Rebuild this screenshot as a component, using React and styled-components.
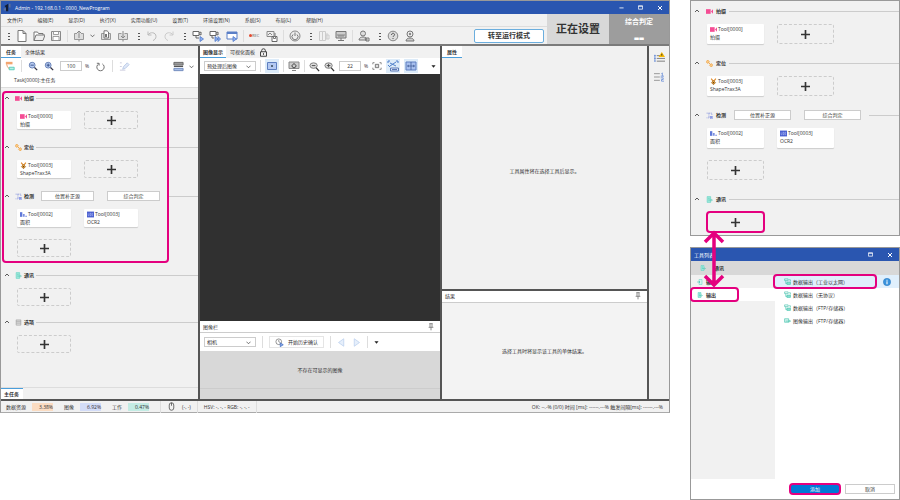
import { useState } from "react";
import styled, { createGlobalStyle } from "styled-components";

const GlobalStyle = createGlobalStyle`
  * {
    box-sizing: border-box;
  }
  body {
    margin: 0;
    background: #fff;
    color: #333;
    font: 5px/8px "Open Sans", "Noto Sans CJK SC", sans-serif;
  }
  button, input, select {
    margin: 0;
    padding: 0;
    font: inherit;
    color: inherit;
  }
  svg {
    display: block;
    flex: none;
  }
`;

const PINK = "#e4007f";

/* ---------- icons, all on a 12 x 12 grid ---------- */

const magnifier = (
  <>
    <path d="M7.5 7.5 11 11" stroke="#334" strokeWidth="1.5" />
    <circle cx="5" cy="5" r="3.5" fill="#b9cdf3" stroke="#5b76ad" />
  </>
);

const grayMagnifier = (
  <>
    <path d="M7.5 7 11 11" stroke="#333" strokeWidth="1.4" />
    <ellipse cx="5" cy="5" rx="4" ry="3" fill="#ddd" stroke="#777" />
  </>
);

const shapes = {
  app: (
    <>
      <path d="M2 4 7 1v10H4V6z" fill="#111c33" />
      <path d="M1 7h3v3H1zM8 1h2v5H8z" fill="#5f7198" />
    </>
  ),
  newFile: <path d="M2 .5h5l3 3v8H2zM7 .5v3h3" fill="#fff" stroke="#777" />,
  open: (
    <>
      <path d="M1 10.500V2h3.500l1 1.500H10V5" fill="#fff" stroke="#777" />
      <path d="M1 10.500 3 5h9l-2 5.500z" fill="#eee" stroke="#777" />
    </>
  ),
  save: (
    <>
      <path d="M1.500 1.500h9v9h-9z" fill="#eee" stroke="#888" />
      <path d="M3.500 1.500h5v3h-5zM3 6.500h6v4H3z" fill="#fff" stroke="#888" strokeWidth=".8" />
    </>
  ),
  upload: (
    <>
      <path d="M4 3.500H1.500v6h9v-6H8" fill="#ddd" stroke="#999" />
      <path d="M6 8V1M4 3l2-2 2 2M6 10v1.500" stroke="#888" />
    </>
  ),
  copy: (
    <>
      <path d="M4 3.500H1.500v6h9v-6H8" fill="#ddd" stroke="#999" />
      <path d="M4 .8h3L8.500 2v6H4z" fill="#fff" stroke="#777" />
      <path d="M5 4h2v3H5z" fill="#777" />
    </>
  ),
  merge: (
    <>
      <path d="M4.500 3.500h-3v6h9v-6h-3" fill="#ddd" stroke="#999" />
      <path d="M6 1v7M4 6l2 2 2-2M6 10v1.500" stroke="#888" />
    </>
  ),
  undo: <path d="M2 1.500V5h3.500M2 5c2-3.500 8-3 8 1.500 0 2-1.500 3.500-3 4" stroke="#bbb" />,
  redo: <path d="M10 1.500V5H6.500M10 5C8 1.500 2 2 2 6.500c0 2 1.500 3.500 3 4" stroke="#ccc" />,
  camera1: (
    <>
      <path d="M1 1.500h6v4H1zM7 3l2-1v3L7 4" fill="#fff" stroke="#666" />
      <path d="M4 6v2h3" stroke="#666" />
      <path d="M8 6.500 11.500 9 8 11.500z" fill="#8fb0ee" stroke="#4f78cc" strokeWidth=".8" />
    </>
  ),
  camera2: (
    <>
      <path d="M1 1.500h6v4H1zM7 3l2-1v3L7 4" fill="#fff" stroke="#666" />
      <path d="M3 6v2h2" stroke="#666" />
      <path d="M6 6.500 9 9l-3 2.500zM9 6.500 11.500 9 9 11.500z" fill="#8fb0ee" stroke="#4f78cc" strokeWidth=".8" />
    </>
  ),
  windowRun: (
    <>
      <path d="M1 2h10v7H1z" fill="#fff" stroke="#5a7fc7" />
      <path d="M1 2h10v2H1z" fill="#5a7fc7" />
      <path d="M7 6.500 10.500 9 7 11.500z" fill="#8fb0ee" stroke="#4f78cc" strokeWidth=".8" />
    </>
  ),
  imageSave: (
    <>
      <path d="M1 1.500h7v5H1zM2 5l2-2 2 2" fill="#eee" stroke="#888" />
      <path d="M6 6.500h5v5H6z" fill="#fff" stroke="#666" />
      <path d="M7.500 6.500h2v2h-2zM9 3v3" stroke="#777" />
    </>
  ),
  clock: (
    <>
      <circle cx="6" cy="6" r="5" fill="#eee" stroke="#888" />
      <path d="M4 4.500a3 3 0 1 0 4 0M6 2.500V6" stroke="#777" />
    </>
  ),
  layout: <path d="M1.500 1.500h3v9h-3zM4.500 1.500h3v9h-3zM8 5h3v4H8zM9 3v6" stroke="#ccc" />,
  monitor: (
    <>
      <path d="M1 1.500h10v6.500H1z" fill="#ccc" stroke="#777" />
      <path d="M3 4v2h6V4M5 4v2M7 4v2" stroke="#777" strokeWidth=".8" />
      <path d="M6 8v2M3 10.500h6" stroke="#777" />
    </>
  ),
  user: (
    <>
      <circle cx="5" cy="3.500" r="2.500" fill="#ddd" stroke="#777" />
      <path d="M1 10c0-4 8-4 8 0zM7 8h4v3H8z" fill="#ddd" stroke="#777" />
    </>
  ),
  help: (
    <>
      <circle cx="6" cy="6" r="4.800" fill="#ddd" stroke="#888" />
      <path d="M4.500 5c0-2.500 3.500-2 3 0C7.300 6 6 6 6 7M6 8v1" stroke="#555" />
    </>
  ),
  support: (
    <>
      <circle cx="6" cy="4" r="3" fill="#eee" stroke="#777" />
      <circle cx="6" cy="4" r="1.200" fill="#888" />
      <path d="M2 11c0-4 8-4 8 0z" fill="#ccc" stroke="#777" />
    </>
  ),
  tree: (
    <>
      <path d="M1 1h8v3H1z" fill="#f2a56f" />
      <path d="M2 4c1 4 2 5 4 5" stroke="#e8894d" />
      <path d="M5 7.500h6v3H5z" fill="#b8f0e5" stroke="#4cc9b4" />
    </>
  ),
  zoomOut: <>{magnifier}<path d="M3 5h4" stroke="#27427d" /></>,
  zoomIn: <>{magnifier}<path d="M3 5h4M5 3v4" stroke="#27427d" /></>,
  grayOut: <>{grayMagnifier}<path d="M3 5h4" stroke="#444" /></>,
  grayIn: <>{grayMagnifier}<path d="M3 5h4M5 3v4" stroke="#444" /></>,
  refresh: <path d="M4 3.200a4 4 0 1 0 4 0M2 2.500h2.500V5" stroke="#666" />,
  pen: (
    <>
      <path d="M1 2h2M1 6h2M1 10h6" stroke="#ccd" />
      <path d="m4 9 1-3 4-4 2 2-4 4z" fill="#dfe8f8" stroke="#b9c9e6" />
    </>
  ),
  stack: (
    <>
      <path d="M1 1.500h10v3H1z" fill="#999" stroke="#666" />
      <path d="M1 6h10" stroke="#444" />
      <path d="M1 8h10v2.500H1z" fill="#a9bfe6" stroke="#6d88bb" />
    </>
  ),
  fit: (
    <>
      <path d="M1.500 2.500h9v7h-9z" fill="#b3c9f2" stroke="#5d7ec0" />
      <path d="M5 6h2M6 5v2" stroke="#345" />
    </>
  ),
  liveView: (
    <>
      <path d="M1 2h10v6.500H1zM4 10.500h4" fill="#ccc" stroke="#888" />
      <path d="M4.500 4.500a2 2 0 1 0 3 0M6 3v2" stroke="#444" />
    </>
  ),
  expand: (
    <>
      <path d="M1 4V2h2M9 2h2v2M11 8v2H9M3 10H1V8" stroke="#777" />
      <path d="M4 4h4v4H4z" fill="#ddd" stroke="#666" />
    </>
  ),
  autoFit: (
    <>
      <path d="M1 3V1h2M9 1h2v2M1 5l2 2M3 3l6 3M9 2 3 6" stroke="#4f7fc9" />
      <path d="M3.500 8h8v3h-8z" fill="#dfe8f8" stroke="#5a79b5" />
      <path d="M5 9.500h5" stroke="#5a79b5" />
    </>
  ),
  split: (
    <>
      <path d="M1 2h10v8H1z" fill="#a8c0ee" stroke="#5f7fc0" />
      <path d="M6 2v8M2.500 6h7M4 5 2.500 6 4 7M8 5l1.500 1L8 7" stroke="#456199" strokeWidth=".8" />
    </>
  ),
  lock: (
    <>
      <path d="M3.500 5V3.500a2.500 2.500 0 0 1 5 0V5M2 5h8v6H2z" stroke="#333" strokeWidth="1.200" />
      <path d="M6 7v2" stroke="#333" strokeWidth="1.400" />
    </>
  ),
  history: (
    <>
      <circle cx="5" cy="5" r="3.800" fill="#fff" stroke="#777" />
      <path d="M5 2.500V5l2 1" stroke="#777" />
      <path d="M7 6.500 11 9l-4 2.500z" fill="#8fb0ee" stroke="#3f68bc" />
    </>
  ),
  prev: <path d="M9 1v10L2 6z" fill="#e6effb" stroke="#b9cfee" />,
  next: <path d="M3 1v10l7-5z" fill="#e6effb" stroke="#b9cfee" />,
  pin: <path d="M3.500 1h5M4.500 1v5M7.500 1v5M2.500 6.500h7M6 6.500V11" stroke="#555" />,
  mouse: <path d="M3 4a3 3 0 0 1 6 0v4a3 3 0 0 1-6 0zM6 1v4" stroke="#444" />,
  video: (
    <>
      <path d="M0 2h8v8H0z" fill="#f44d94" />
      <path d="m8.500 6 3.500-4v8z" fill="#f44d94" />
    </>
  ),
  locate: (
    <>
      <path d="M4 4l4 4" stroke="#f29b30" strokeWidth="1.500" />
      <path d="m3 0 3 3-3 3-3-3zM9 6l3 3-3 3-3-3z" fill="#f9ca86" stroke="#ee9428" />
    </>
  ),
  inspect: (
    <>
      <path d="M1 2h4v8H1M5 2h5v4M7 8h4v3H7z" stroke="#6577d8" strokeDasharray="2 1" />
      <path d="M7 7h4v4H7z" fill="#8b9ae8" />
    </>
  ),
  comm: (
    <>
      <path d="M2 1h6v10H2z" fill="#9de7da" stroke="#5fd3c1" />
      <path d="M4 4h2M4 7h6M9 5l2 2-2 2" stroke="#45c3af" />
    </>
  ),
  option: <path d="M2 1.500h8v9H2zM2 4h8M2 7h8" fill="#ddd" stroke="#999" />,
  trax: (
    <>
      <path d="m2 1 3 4M10 1 7 5" stroke="#e08b2c" strokeWidth="2" />
      <path d="M6 4 9.500 8 6 11.500 2.500 8z" fill="#f0a93f" stroke="#835015" />
      <circle cx="6" cy="8" r="1.200" fill="#553410" />
    </>
  ),
  area: (
    <>
      <path d="M0 2h4v8H0z" fill="#5f78d8" />
      <path d="M5 5h3v5H5zM9 8h3v2H9z" fill="#7b8fe0" />
    </>
  ),
  ocr: (
    <>
      <path d="M0 1h12v10H0z" fill="#4a5fd0" />
      <path d="M2 4v4h1.500M5 4v4h2V4zM10.500 4H9v4h1.500" stroke="#c9d3ff" strokeWidth=".8" />
    </>
  ),
  output: (
    <>
      <path d="M1 1.500h6v3H1zM3 4.500v5h2" stroke="#35bda6" />
      <path d="M5 7h6v4H5z" fill="#8fe0d3" stroke="#35bda6" />
      <path d="M8 3h3v3" stroke="#35bda6" />
    </>
  ),
  imageOut: <path d="M1 3h7v6H1zM3 7h8M9 5l2 2-2 2" fill="#d5f5ef" stroke="#35bda6" />,
  input: (
    <>
      <path d="M4 1h6v10H4z" fill="#d5f5ef" stroke="#5fd3c1" />
      <path d="M0 6h6M4 4l2 2-2 2" stroke="#35bda6" />
    </>
  ),
  info: (
    <>
      <circle cx="6" cy="6" r="5.500" fill="#3a93dd" stroke="#1e6fb8" strokeWidth=".6" />
      <path d="M6 5v4.500M6 2.500V4" stroke="#fff" strokeWidth="1.600" />
    </>
  ),
  alertList: (
    <>
      <path d="M1 3v7M0 4h2M0 7h2M0 10h2" stroke="#6b8fd8" />
      <path d="M3 4h4M3 7h9M3 10h9" stroke="#777" />
      <path d="m8.500 0 3.500 5.500H5z" fill="#f6b800" />
      <path d="M8.500 2v2" stroke="#333" />
    </>
  ),
  numbered: (
    <>
      <path d="M0 2h7M0 6h7M0 10h7" stroke="#888" />
      <path d="M9 2l1-1v4M8 5h4M8 7h3v2H9v2h3" stroke="#6b8fd8" />
    </>
  ),
  up: <path d="m2 8 4-4 4 4" stroke="#333" strokeWidth="1.600" />,
  down: <path d="m1 4 5 5 5-5" stroke="#333" strokeWidth="1.600" />,
  triangle: <path d="M1 3h10L6 9z" fill="#222" />,
  plus: <path d="M6 0v12M0 6h12" stroke="#333" strokeWidth="2.200" />,
  minimize: <path d="M1 7h10" stroke="#fff" strokeWidth="2" />,
  maximize: <path d="M1 2h10v8H1zM1 3h10" stroke="#fff" strokeWidth="1.800" />,
  close: <path d="m2 2 8 8M10 2l-8 8" stroke="#fff" strokeWidth="2" />,
};

function Icon({ name, size = 12 }) {
  return (
    <svg width={size} height={size} viewBox="0 0 12 12" fill="none" aria-hidden="true">
      {shapes[name]}
    </svg>
  );
}

/* ---------- data ---------- */

const menus = ["文件(F)", "编辑(E)", "显示(D)", "执行(X)", "实用功能(U)", "设置(T)", "环境设置(N)", "系统(S)", "布局(L)", "帮助(H)"];

const capture = {
  title: "拍摄",
  icon: "video",
  tools: [{ icon: "video", id: "Tool[0000]", name: "拍摄" }],
};

const locate = {
  title: "定位",
  icon: "locate",
  tools: [{ icon: "trax", id: "Tool[0003]", name: "ShapeTrax3A" }],
};

const inspect = {
  title: "检测",
  icon: "inspect",
  actions: ["位置补正源", "综合判定"],
  tools: [
    { icon: "area", id: "Tool[0002]", name: "面积" },
    { icon: "ocr", id: "Tool[0003]", name: "OCR2" },
  ],
};

const outputs = [
  { icon: "output", name: "数据输出（工业以太网）" },
  { icon: "output", name: "数据输出（无协议）" },
  { icon: "output", name: "数据输出（FTP/存储器）" },
  { icon: "imageOut", name: "图像输出（FTP/存储器）" },
];

/* ---------- shared parts ---------- */

function ToolSection({ title, icon, actions = [], tools = [], large, marked }) {
  return (
    <Section $large={large}>
      <SectionHead $large={large}>
        <FoldButton aria-label={`折叠${title}`}>
          <Icon name="up" size={6} />
        </FoldButton>
        <Icon name={icon} size={7} />
        <SectionTitle>{title}</SectionTitle>
        {actions.length > 0 && (
          <Actions $large={large}>
            {actions.map((action) => (
              <ActionButton key={action} $large={large}>{action}</ActionButton>
            ))}
          </Actions>
        )}
        <Rule />
      </SectionHead>
      <ToolGrid $large={large}>
        {tools.map((tool) => (
          <ToolCard key={tool.id}>
            <ToolId>
              <Icon name={tool.icon} size={7} />
              {tool.id}
            </ToolId>
            {tool.name}
          </ToolCard>
        ))}
        <AddTool aria-label={`${title} 添加工具`} $marked={marked}>
          <Icon name="plus" size={9} />
          {marked && <Mark />}
        </AddTool>
      </ToolGrid>
    </Section>
  );
}

function PickBox({ label, value }) {
  return (
    <Pick>
      <select aria-label={label} defaultValue={value}>
        <option>{value}</option>
      </select>
      <Icon name="down" size={5} />
    </Pick>
  );
}

function Tool({ name, label, active, size, children }) {
  return (
    <IconButton aria-label={label} $active={active}>
      <Icon name={name} size={size} />
      {children}
    </IconButton>
  );
}

/* ---------- main window ---------- */

function Header() {
  return (
    <>
      <TitleBar>
        <Icon name="app" size={9} />
        <WindowTitle>Admin - 192.168.0.1 - 0000_NewProgram</WindowTitle>
        <WindowButtons>
          <IconButton aria-label="最小化"><Icon name="minimize" size={5} /></IconButton>
          <IconButton aria-label="最大化"><Icon name="maximize" size={5} /></IconButton>
          <IconButton aria-label="关闭"><Icon name="close" size={6} /></IconButton>
        </WindowButtons>
      </TitleBar>
      <HeaderRow>
        <HeaderLeft>
          <MenuBar>
            {menus.map((menu) => (
              <MenuButton key={menu}>{menu}</MenuButton>
            ))}
          </MenuBar>
          <Toolbar>
            <Grip />
            <Tool name="newFile" label="新建" />
            <Tool name="open" label="打开" />
            <Tool name="save" label="保存" />
            <Divider />
            <Tool name="upload" label="导出">
              <Icon name="down" size={5} />
            </Tool>
            <Tool name="copy" label="复制" />
            <Tool name="merge" label="导入" />
            <Grip />
            <Tool name="undo" label="撤销" />
            <Tool name="redo" label="重做" />
            <Grip />
            <Tool name="camera1" label="单次拍摄" />
            <Tool name="camera2" label="连续拍摄" />
            <Tool name="windowRun" label="执行" />
            <Divider />
            <RecButton>REC</RecButton>
            <Tool name="imageSave" label="保存图像" />
            <Divider />
            <Tool name="clock" label="时间" />
            <Grip />
            <Tool name="layout" label="布局" />
            <Tool name="monitor" label="监视器" />
            <Divider />
            <Tool name="user" label="用户" />
            <Grip />
            <Tool name="help" label="帮助" />
            <Tool name="support" label="支持" />
            <RunButton>转至运行模式</RunButton>
          </Toolbar>
        </HeaderLeft>
        <ModeLabel>正在设置</ModeLabel>
        <Judge>
          综合判定
          <b>--</b>
        </Judge>
      </HeaderRow>
    </>
  );
}

function TaskPane() {
  return (
    <Pane>
      <Tabs>
        <Tab $active>任务</Tab>
        <Tab>全体结果</Tab>
      </Tabs>
      <PaneTools $gap={6}>
        <Tool name="tree" label="任务树" size={10} />
        <Divider />
        <Tool name="zoomOut" label="缩小" size={10} />
        <Tool name="zoomIn" label="放大" size={10} />
        <NumberField>
          <input aria-label="任务倍率" defaultValue="100" />%
        </NumberField>
        <Tool name="refresh" label="刷新" size={11} />
        <Divider />
        <Tool name="pen" label="编辑" size={11} />
        <Spacer />
        <Tool name="stack" label="显示方式" size={11}>
          <Icon name="down" size={5} />
        </Tool>
      </PaneTools>
      <Breadcrumb>Task[0000]:主任务</Breadcrumb>
      <TaskBody>
        <MarkedGroup>
          <ToolSection {...capture} />
          <ToolSection {...locate} />
          <ToolSection {...inspect} />
          <GroupMark />
        </MarkedGroup>
        <ToolSection title="通讯" icon="comm" />
        <ToolSection title="选项" icon="option" />
      </TaskBody>
      <BottomTabs>
        <BottomTab>主任务</BottomTab>
      </BottomTabs>
    </Pane>
  );
}

function ImagePane() {
  return (
    <Pane>
      <Tabs>
        <Tab $active>图像显示</Tab>
        <Tab>可视化面板</Tab>
        <Tool name="lock" label="锁定" size={9} />
      </Tabs>
      <PaneTools $gap={4}>
        <PickBox label="图像类型" value="预处理后图像" />
        <Divider />
        <Tool name="fit" label="适合窗口" active />
        <Divider />
        <Tool name="liveView" label="实时" />
        <Divider />
        <Tool name="grayOut" label="缩小" size={11} />
        <Tool name="grayIn" label="放大" size={11} />
        <NumberField>
          <input aria-label="图像倍率" defaultValue="22" />%
        </NumberField>
        <Tool name="expand" label="全部显示" size={10} />
        <Tool name="autoFit" label="自动" active />
        <Tool name="split" label="分割显示" active />
        <Spacer />
        <Tool name="triangle" label="更多" size={5} />
      </PaneTools>
      <Canvas />
      <PaneTitle>
        图像栏
        <Tool name="pin" label="固定图像栏" size={8} />
      </PaneTitle>
      <HistoryTools $gap={6}>
        <PickBox label="来源" value="相机" />
        <Divider />
        <HistoryButton>
          <Icon name="history" size={9} />
          开始历史确认
        </HistoryButton>
        <Divider />
        <Tool name="prev" label="上一张" size={9} />
        <Tool name="next" label="下一张" size={9} />
        <Divider />
        <Tool name="triangle" label="更多历史" size={5} />
      </HistoryTools>
      <Film>不存在可显示的图像</Film>
      <FilmFoot />
    </Pane>
  );
}

function MainWindow() {
  return (
    <Window>
      <Header />
      <Workspace>
        <TaskPane />
        <ImagePane />
        <Stack>
          <Pane>
            <Tabs>
              <Tab $active>属性</Tab>
            </Tabs>
            <Message $bias>工具属性将在选择工具后显示。</Message>
          </Pane>
          <ResultPane>
            <PaneTitle>
              结果
              <Tool name="pin" label="固定结果" size={8} />
            </PaneTitle>
            <Message>选择工具时将显示该工具的单体结果。</Message>
          </ResultPane>
        </Stack>
        <SideStrip>
          <Tool name="alertList" label="警告列表" size={11} />
          <Tool name="numbered" label="编号列表" size={10} />
        </SideStrip>
      </Workspace>
      <StatusBar>
        数据资源 <Meter $color="#fbdcc2">3.38%</Meter>
        图像 <Meter $color="#d3dcf8">6.92%</Meter>
        工作 <Meter $color="#c3ece4">0.47%</Meter>
        <Divider />
        <Icon name="mouse" size={9} />
        <span>(-, -)</span>
        <Divider />
        <span>HSV: -, -, - RGB: -, -, -</span>
        <Divider />
        <Spacer />
        <span>OK: --.-% (0/0) 时间 [ms]: ------.---% 触发间隔[ms]: ------.---%</span>
      </StatusBar>
    </Window>
  );
}

/* ---------- tool list dialog ---------- */

function ToolDialog() {
  const [selected, setSelected] = useState(0);

  return (
    <Dialog role="dialog" aria-label="工具列表">
      <DialogTitle>
        工具列表
        <WindowButtons>
          <IconButton aria-label="最大化"><Icon name="maximize" size={5} /></IconButton>
          <IconButton aria-label="关闭"><Icon name="close" size={6} /></IconButton>
        </WindowButtons>
      </DialogTitle>
      <DialogHead>
        <Icon name="comm" size={6} />
        通讯
      </DialogHead>
      <DialogBody>
        <DialogNav>
          <NavItem>
            <Icon name="input" size={6} />
            输入
          </NavItem>
          <NavItem $active>
            <Icon name="comm" size={6} />
            输出
            <NavMark />
          </NavItem>
        </DialogNav>
        <OutputList>
          {outputs.map((item, i) => (
            <OutputRow key={item.name} $active={i === selected}>
              <OutputButton onClick={() => setSelected(i)}>
                <Icon name={item.icon} size={7} />
                {item.name}
                {i === selected && <RowMark />}
              </OutputButton>
              {i === selected && <Icon name="info" size={8} />}
            </OutputRow>
          ))}
        </OutputList>
      </DialogBody>
      <DialogFoot>
        <FootButton $primary>
          添加
          <Mark />
        </FootButton>
        <FootButton>取消</FootButton>
      </DialogFoot>
    </Dialog>
  );
}

export default function App() {
  return (
    <>
      <GlobalStyle />
      <Page>
        <MainWindow />
        <SideColumn>
          <DetailPanel>
            <ToolSection large {...capture} />
            <ToolSection large {...locate} />
            <ToolSection large {...inspect} />
            <ToolSection large title="通讯" icon="comm" marked />
          </DetailPanel>
          <ToolDialog />
          <Arrow width="24" height="58" viewBox="0 0 24 58" fill="none" aria-hidden="true">
            <path d="M12 3v52M3 12l9-9 9 9M3 46l9 9 9-9" stroke={PINK} strokeWidth="3.500" />
          </Arrow>
        </SideColumn>
      </Page>
    </>
  );
}

/* ---------- styles ---------- */

const Page = styled.main`
  display: flex;
  align-items: flex-start;
  gap: 20px;
`;

const Window = styled.section`
  flex: 1;
  min-width: 0;
  border: 1px solid #999;
  border-bottom: 1px solid #aaa;
  background: #f1f1f1;
`;

const TitleBar = styled.header`
  display: flex;
  align-items: center;
  gap: 3px;
  height: 13px;
  padding: 0 6px 0 2px;
  background: #2a56b0;
  color: #fff;
`;

const WindowTitle = styled.h1`
  flex: 1;
  margin: 0;
  font-size: 5px;
  font-weight: 400;
`;

const WindowButtons = styled.div`
  display: flex;
  gap: 14px;
`;

const IconButton = styled.button`
  display: flex;
  align-items: center;
  gap: 5px;
  flex: none;
  padding: ${(p) => (p.$active ? "1px" : "0")};
  border: 0;
  background: ${(p) => (p.$active ? "#dcebf9" : "none")};
`;

const HeaderRow = styled.div`
  display: flex;
  border-bottom: 2px solid #7b7b7b;
`;

const HeaderLeft = styled.div`
  flex: 1;
`;

const MenuBar = styled.nav`
  display: flex;
  align-items: center;
  gap: 15px;
  height: 13px;
  padding-left: 6px;
  border-bottom: 1px solid #ddd;
`;

const MenuButton = styled.button`
  border: 0;
  background: none;
  white-space: nowrap;
`;

const Toolbar = styled.div`
  display: flex;
  align-items: center;
  gap: 5px;
  height: 17px;
  padding: 0 3px;
`;

const Grip = styled.span`
  width: 4px;
  height: 8px;
  margin-left: 3px;
  background: radial-gradient(circle, #555 1px, transparent 1px) 0 0 / 4px 3px;
`;

const Divider = styled.span`
  width: 1px;
  height: 12px;
  background: #ddd;
`;

const Spacer = styled.span`
  flex: 1;
`;

const RecButton = styled.button`
  display: flex;
  align-items: center;
  width: 12px;
  border: 0;
  background: none;
  color: #666;
  font-size: 4px;

  &::before {
    content: "";
    flex: none;
    width: 3px;
    height: 3px;
    border-radius: 50%;
    background: #e34a2f;
  }
`;

const RunButton = styled.button`
  width: 70px;
  height: 14px;
  margin-left: auto;
  border: 1px solid #6baede;
  border-radius: 2px;
  background: #fff;
  font-size: 7px;
  font-weight: 700;
`;

const ModeLabel = styled.div`
  display: grid;
  place-items: center;
  width: 62px;
  background: #d8d8d8;
  font-size: 11px;
  font-weight: 700;
`;

const Judge = styled.div`
  display: grid;
  place-items: center;
  width: 60px;
  background: #9d9d9d;
  color: #fff;
  font-size: 7px;
  font-weight: 700;

  b {
    font-size: 16px;
  }
`;

const Workspace = styled.div`
  display: grid;
  grid-template-columns: 197fr 240fr 205fr 20px;
  gap: 2px;
  border-bottom: 2px solid #555;
  background: #555;
`;

const Pane = styled.section`
  display: flex;
  flex-direction: column;
  min-width: 0;
  background: #f1f1f1;
`;

const Tabs = styled.div`
  display: flex;
  align-items: center;
  height: 12px;
`;

const Tab = styled.button`
  min-width: 20px;
  height: 12px;
  padding: 0 3px;
  border: 0;
  border-bottom: 1px solid ${(p) => (p.$active ? "#4a9edb" : "transparent")};
  background: ${(p) => (p.$active ? "#fff" : "none")};
  font-weight: ${(p) => (p.$active ? 700 : 400)};

  & + & {
    padding: 0 4px;
  }
`;

const PaneTools = styled.div`
  display: flex;
  align-items: center;
  gap: ${(p) => p.$gap}px;
  height: 16px;
  padding: 0 4px;
  background: #fff;
`;

const NumberField = styled.label`
  display: flex;
  align-items: center;
  gap: 3px;

  input {
    width: 22px;
    height: 10px;
    border: 1px solid #ccc;
    background: #fff;
    text-align: center;
  }
`;

const Pick = styled.label`
  display: grid;
  flex: none;
  grid-template-columns: 1fr 9px;
  align-items: center;
  width: 52px;
  height: 10px;
  border: 1px solid #ccc;
  background: #fff;

  select {
    grid-area: 1 / 1 / 2 / 3;
    height: 8px;
    padding-left: 2px;
    border: 0;
    background: none;
    appearance: none;
  }

  svg {
    grid-area: 1 / 2;
    pointer-events: none;
  }
`;

const Breadcrumb = styled.div`
  padding: 2px 13px 3px;
  border-bottom: 1px solid #ddd;
  background: #fff;
`;

const Section = styled.section`
  padding-bottom: ${(p) => (p.$large ? 13 : 10)}px;
`;

const TaskBody = styled.div`
  flex: 1;
  padding: 4px 0 24px;
`;

const MarkedGroup = styled.div`
  position: relative;

  ${Section} {
    padding-bottom: 12px;
  }
`;

const Mark = styled.span`
  position: absolute;
  inset: -2px;
  border: 2px solid ${PINK};
  border-radius: 4px;
  pointer-events: none;
`;

const GroupMark = styled(Mark)`
  inset: -1px 29px 6px 1px;
`;

const SectionHead = styled.div`
  display: flex;
  align-items: center;
  gap: ${(p) => (p.$large ? 3 : 2)}px;
  height: 12px;
  padding-left: 3px;
`;

const FoldButton = styled.button`
  width: 9px;
  border: 0;
  background: none;
`;

const SectionTitle = styled.h2`
  margin: 0;
  font-size: 5px;
  font-weight: 700;
`;

const Actions = styled.div`
  display: flex;
  gap: 13px;
  padding: 0 5px;
`;

const ActionButton = styled.button`
  width: ${(p) => (p.$large ? 57 : 53)}px;
  height: 10px;
  border: 1px solid #ccc;
  background: #fff;
`;

const Rule = styled.span`
  flex: 1;
  height: 1px;
  background: #ccc;
`;

const ToolGrid = styled.div`
  display: grid;
  grid-template-columns: repeat(2, ${(p) => (p.$large ? 57 : 54)}px);
  grid-auto-rows: ${(p) => (p.$large ? 20 : 18)}px;
  gap: 12px 13px;
  padding: 7px 0 0 16px;
`;

const ToolCard = styled.div`
  padding: 1px 3px;
  border-radius: 1px;
  background: #fff;
  box-shadow: 0 1px 1px #ccc;
`;

const ToolId = styled.div`
  display: flex;
  align-items: center;
  gap: 1px;
`;

const AddTool = styled.button`
  position: relative;
  display: grid;
  place-items: center;
  border: 1px dashed ${(p) => (p.$marked ? "transparent" : "#ccc")};
  border-radius: 2px;
  background: none;
`;

const BottomTabs = styled.div`
  display: flex;
  border-top: 1px solid #ddd;
`;

const BottomTab = styled.button`
  height: 11px;
  padding: 0 4px 0 3px;
  border: 0;
  border-top: 1px solid #4a9edb;
  background: #fff;
  font-weight: 700;
`;

const Canvas = styled.div`
  flex: 1;
  background: #303030;
`;

const PaneTitle = styled.h2`
  display: flex;
  align-items: center;
  justify-content: space-between;
  height: 12px;
  margin: 0;
  padding: 0 5px 0 3px;
  border-bottom: 1px solid #ccc;
  background: #fff;
  font-size: 5px;
  font-weight: 400;
`;

const HistoryTools = styled(PaneTools)`
  height: 18px;
`;

const HistoryButton = styled.button`
  display: flex;
  align-items: center;
  gap: 4px;
  height: 12px;
  padding: 0 5px;
  border: 1px solid #e5e5e5;
  background: #fff;
`;

const Film = styled.div`
  display: grid;
  place-items: center;
  height: 37px;
  background: #d8d8d8;
`;

const FilmFoot = styled.div`
  height: 11px;
  border-top: 1px solid #ccc;
  background: #d8d8d8;
`;

const Stack = styled.div`
  display: grid;
  grid-template-rows: 242fr 108fr;
  gap: 2px;
`;

const ResultPane = styled(Pane)`
  background: #f3f3f3;
`;

const Message = styled.p`
  display: grid;
  flex: 1;
  place-items: center;
  margin: 0;
  padding-bottom: ${(p) => (p.$bias ? 4 : 0)}px;
`;

const SideStrip = styled.aside`
  display: flex;
  flex-direction: column;
  align-items: center;
  gap: 9px;
  padding-top: 6px;
  background: #f1f1f1;
`;

const StatusBar = styled.footer`
  display: flex;
  align-items: center;
  gap: 6px;
  height: 11px;
  padding: 0 6px 0 5px;
  white-space: nowrap;
`;

const Meter = styled.span`
  width: 21px;
  margin-right: 5px;
  background: ${(p) => p.$color};
  text-align: right;
`;

const SideColumn = styled.aside`
  position: relative;
  flex: 0 0 210px;
`;

const DetailPanel = styled.section`
  padding-top: 4px;
  border: 1px solid #999;
  background: #f1f1f1;

  & > :last-child {
    padding-bottom: 3px;
  }
`;

const Dialog = styled.section`
  margin-top: 11px;
  border: 1px solid #999;
  background: #fff;
`;

const DialogTitle = styled.h2`
  display: flex;
  align-items: center;
  justify-content: space-between;
  height: 13px;
  margin: 0;
  padding: 0 6px 0 3px;
  background: #2a56b0;
  color: #fff;
  font-size: 5px;
  font-weight: 400;
`;

const DialogHead = styled.h3`
  display: flex;
  align-items: center;
  gap: 8px;
  height: 14px;
  margin: 0;
  padding-left: 9px;
  background: #d8d8d8;
  font-size: 5px;
  font-weight: 700;
`;

const DialogBody = styled.div`
  display: grid;
  grid-template-columns: 84px 1fr;
  min-height: 204px;
`;

const DialogNav = styled.nav`
  background: #f1f1f1;
`;

const NavItem = styled.button`
  position: relative;
  display: flex;
  align-items: center;
  gap: 3px;
  width: 100%;
  height: 13px;
  padding-left: 6px;
  border: 0;
  background: ${(p) => (p.$active ? "#fff" : "none")};
  font-weight: 700;
`;

const NavMark = styled(Mark)`
  inset: -1px 36px -1px -1px;
`;

const OutputList = styled.ul`
  margin: 0;
  padding: 0;
  list-style: none;
`;

const OutputRow = styled.li`
  display: flex;
  align-items: center;
  gap: 6px;
  height: 13px;
  background: ${(p) => (p.$active ? "#e0effc" : "none")};
`;

const OutputButton = styled.button`
  position: relative;
  display: flex;
  align-items: center;
  gap: 2px;
  width: 102px;
  height: 13px;
  padding-left: 9px;
  border: 0;
  background: none;
  white-space: nowrap;
`;

const RowMark = styled(Mark)`
  inset: -1px 0 -1px -2px;
`;

const DialogFoot = styled.footer`
  display: flex;
  justify-content: flex-end;
  gap: 5px;
  padding: 5px 4px;
`;

const FootButton = styled.button`
  position: relative;
  width: 50px;
  height: 10px;
  border: 1px solid ${(p) => (p.$primary ? "#0078d7" : "#ccc")};
  background: ${(p) => (p.$primary ? "#0078d7" : "#fff")};
  color: ${(p) => (p.$primary ? "#fff" : "inherit")};
`;

const Arrow = styled.svg`
  position: absolute;
  top: 230px;
  left: 12px;
`;
